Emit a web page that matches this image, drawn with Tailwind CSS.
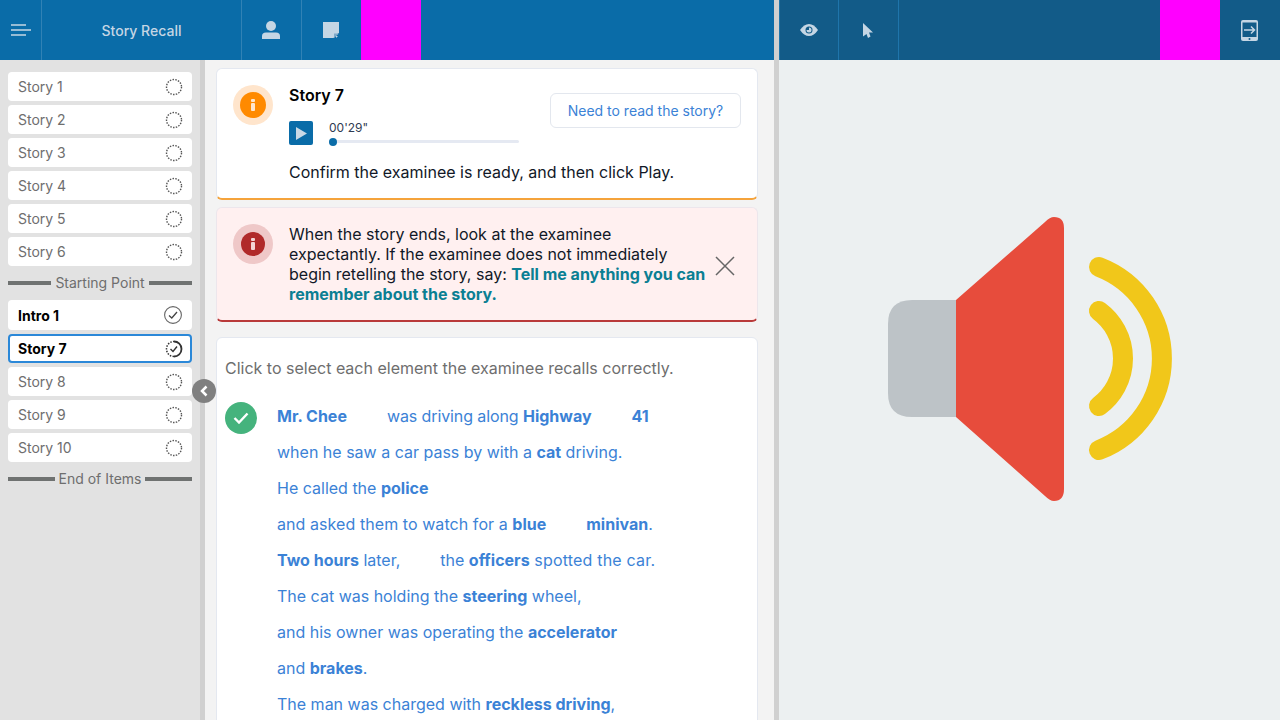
<!DOCTYPE html>
<html lang="en">
<head>
  <meta charset="UTF-8" />
  <title>Story Recall</title>
  <script src="https://cdn.jsdelivr.net/npm/@tailwindcss/browser@4"></script>
</head>
<body class="h-screen overflow-hidden font-['Inter',sans-serif] bg-[#f3f3f3]">
  <div class="flex h-[720px]">

    <!-- Left side -->
    <div class="w-[774px] flex flex-col">
      <header class="h-[60px] flex bg-[#0a6ca8] text-[#c5d6e4]">
        <div class="w-[42px] flex items-center justify-center border-r border-[#3182b5] pl-px">
          <svg width="20" height="12" viewBox="0 0 20 12" fill="none" stroke="#c5d6e4" stroke-width="1.5"><path d="M0 1H15M0 6H20M0 11H15"/></svg>
        </div>
        <div class="w-[200px] flex items-center justify-center border-r border-[#3182b5] text-sm font-medium pt-px">Story Recall</div>
        <div class="w-[60px] flex items-center justify-center border-r border-[#3182b5] pr-px">
          <svg width="18" height="18" viewBox="0 0 18 18" fill="#c5d6e4"><circle cx="9" cy="5" r="5"/><path d="M0 18V15Q0 11.500 4 11.500H14Q18 11.500 18 15V18Z"/></svg>
        </div>
        <div class="w-[59px] flex items-center justify-center pr-px">
          <svg width="16" height="16" viewBox="0 0 16 16"><path d="M0 0H16V10.500L10.500 16H0Z" fill="#c5d6e4"/><path d="M11 16V11.500H16Z" fill="#7fa9c9"/><path d="M13 16V14H15Z" fill="#c5d6e4"/></svg>
        </div>
        <div class="w-[60px] bg-[#ff00ff]"></div>
      </header>

      <div class="relative flex-1 flex min-h-0">
        <!-- Item list -->
        <aside class="w-[205px] bg-[#e2e2e2] border-r-[5px] border-[#d0d0d0] pt-3 px-2 text-sm text-[#6e6e6e]">
          <ul class="flex flex-col gap-1">
            <li class="h-[29px] flex items-center justify-between bg-white rounded pl-2.5 pr-[9px]">Story 1<svg width="18" height="18" viewBox="0 0 18 18" fill="none" stroke="#555" stroke-width="1.4" stroke-dasharray="1.500 1.300"><circle cx="9" cy="9" r="7.500"/></svg></li>
            <li class="h-[29px] flex items-center justify-between bg-white rounded pl-2.5 pr-[9px]">Story 2<svg width="18" height="18" viewBox="0 0 18 18" fill="none" stroke="#555" stroke-width="1.4" stroke-dasharray="1.500 1.300"><circle cx="9" cy="9" r="7.500"/></svg></li>
            <li class="h-[29px] flex items-center justify-between bg-white rounded pl-2.5 pr-[9px]">Story 3<svg width="18" height="18" viewBox="0 0 18 18" fill="none" stroke="#555" stroke-width="1.4" stroke-dasharray="1.500 1.300"><circle cx="9" cy="9" r="7.500"/></svg></li>
            <li class="h-[29px] flex items-center justify-between bg-white rounded pl-2.5 pr-[9px]">Story 4<svg width="18" height="18" viewBox="0 0 18 18" fill="none" stroke="#555" stroke-width="1.4" stroke-dasharray="1.500 1.300"><circle cx="9" cy="9" r="7.500"/></svg></li>
            <li class="h-[29px] flex items-center justify-between bg-white rounded pl-2.5 pr-[9px]">Story 5<svg width="18" height="18" viewBox="0 0 18 18" fill="none" stroke="#555" stroke-width="1.4" stroke-dasharray="1.500 1.300"><circle cx="9" cy="9" r="7.500"/></svg></li>
            <li class="h-[29px] flex items-center justify-between bg-white rounded pl-2.5 pr-[9px]">Story 6<svg width="18" height="18" viewBox="0 0 18 18" fill="none" stroke="#555" stroke-width="1.4" stroke-dasharray="1.500 1.300"><circle cx="9" cy="9" r="7.500"/></svg></li>
          </ul>
          <div class="h-[34px] flex items-center gap-1 pb-px">
            <span class="flex-1 h-1 bg-[#6f7271]"></span>Starting Point<span class="flex-1 h-1 bg-[#6f7271]"></span>
          </div>
          <ul class="flex flex-col gap-1">
            <li class="h-[30px] flex items-center justify-between bg-white rounded pl-2.5 pr-2.5 pt-0.5 font-bold text-black">Intro 1<svg class="-mt-0.5" width="18" height="18" viewBox="0 0 18 18" fill="none" stroke="#666" stroke-width="1.100"><circle cx="9" cy="9" r="8.400"/><path d="M5 9.500L7.800 12L13 6" stroke-width="1.300" stroke="#444"/></svg></li>
            <li class="h-[29px] flex items-center justify-between bg-white rounded border-2 border-[#2b88d8] pl-2 pr-[7px] font-bold text-black">Story 7<svg width="18" height="18" viewBox="0 0 18 18" fill="none" stroke="#333"><path d="M9 1.500A7.500 7.500 0 0 1 9 16.500" stroke-width="1.800"/><path d="M9 16.500A7.500 7.500 0 0 1 9 1.500" stroke-width="1.500" stroke-dasharray="1.500 1.300"/><path d="M5.500 9L8 11.500L12 6.500" stroke-width="1.400"/></svg></li>
            <li class="h-[29px] flex items-center justify-between bg-white rounded pl-2.5 pr-[9px]">Story 8<svg width="18" height="18" viewBox="0 0 18 18" fill="none" stroke="#555" stroke-width="1.4" stroke-dasharray="1.500 1.300"><circle cx="9" cy="9" r="7.500"/></svg></li>
            <li class="h-[29px] flex items-center justify-between bg-white rounded pl-2.5 pr-[9px]">Story 9<svg width="18" height="18" viewBox="0 0 18 18" fill="none" stroke="#555" stroke-width="1.4" stroke-dasharray="1.500 1.300"><circle cx="9" cy="9" r="7.500"/></svg></li>
            <li class="h-[29px] flex items-center justify-between bg-white rounded pl-2.5 pr-[9px]">Story 10<svg width="18" height="18" viewBox="0 0 18 18" fill="none" stroke="#555" stroke-width="1.4" stroke-dasharray="1.500 1.300"><circle cx="9" cy="9" r="7.500"/></svg></li>
          </ul>
          <div class="h-[34px] flex items-center gap-1 pb-px">
            <span class="flex-1 h-1 bg-[#6f7271]"></span>End of Items<span class="flex-1 h-1 bg-[#6f7271]"></span>
          </div>
        </aside>

        <!-- Collapse handle -->
        <div class="absolute left-[192px] top-[319px] w-6 h-6 rounded-full bg-[#808080] flex items-center justify-center">
          <svg width="10" height="12" viewBox="0 0 10 12" fill="none" stroke="white" stroke-width="2.500"><path d="M7.500 1.500L3 6L7.500 10.500"/></svg>
        </div>

        <!-- Cards -->
        <main class="w-[569px] pl-[11px] pr-4 pt-2 text-[#111827] text-base">
          <section class="h-[132px] bg-white rounded-md border border-[#e4e8f0] border-b-2 border-b-[#f5a33b] flex pl-4 pt-4 pr-4">
            <div class="w-10 h-10 rounded-full bg-[#ffe5cc] flex items-center justify-center shrink-0">
              <div class="w-[26px] h-[26px] rounded-full bg-[#ff8a00] flex items-center justify-center">
                <svg width="4" height="12" viewBox="0 0 4 12" fill="#ffe5cc"><rect width="4" height="3" y="0" rx="1"/><rect width="4" height="8" y="4" rx="1"/></svg>
              </div>
            </div>
            <div class="flex-1 ml-4">
              <div class="flex justify-between">
                <div>
                  <h2 class="text-base font-semibold text-black leading-5">Story 7</h2>
                  <div class="flex mt-4">
                    <div class="w-6 h-6 bg-[#0a6ca8] rounded-xs flex items-center justify-center">
                      <svg width="11" height="13" viewBox="0 0 11 13" fill="#c9d9e6"><path d="M0 0L11 6.500L0 13Z"/></svg>
                    </div>
                    <div class="ml-4 w-[190px]">
                      <div class="text-xs leading-none mt-px text-[#2f3b52]">00'29"</div>
                      <div class="relative h-[3px] bg-[#e5e9f2] rounded mt-[6px]">
                        <span class="absolute left-0 -top-[2.500px] w-2 h-2 rounded-full bg-[#0a6ca8]"></span>
                      </div>
                    </div>
                  </div>
                </div>
                <button class="h-[35px] w-[191px] mt-2 bg-white border border-[#e3e7ee] rounded-md text-sm text-[#3b82d6]">Need to read the story?</button>
              </div>
              <p class="mt-[17px] leading-5">Confirm the examinee is ready, and then click Play.</p>
            </div>
          </section>

          <section class="mt-[7px] h-[115px] bg-[#fff0f0] rounded-md border border-[#ece6ec] border-b-2 border-b-[#b93a3a] flex pl-4 pt-4 pr-4">
            <div class="w-10 h-10 rounded-full bg-[#efc8c8] flex items-center justify-center shrink-0">
              <div class="w-6 h-6 rounded-full bg-[#b02a2a] flex items-center justify-center">
                <svg width="4" height="12" viewBox="0 0 4 12" fill="#f3d5d5"><rect width="4" height="3" y="0" rx="1"/><rect width="4" height="8" y="4" rx="1"/></svg>
              </div>
            </div>
            <p class="w-[418px] ml-4 leading-5 whitespace-nowrap">When the story ends, look at the examinee<br />expectantly. If the examinee does not immediately<br />begin retelling the story, say: <b class="font-bold text-[#0b7f93]">Tell me anything you can<br />remember about the story.</b></p>
            <div class="ml-[8px] mt-[32px]">
              <svg width="20" height="20" viewBox="0 0 20 20" fill="none" stroke="#666" stroke-width="1.500"><path d="M1 1L19 19M19 1L1 19"/></svg>
            </div>
          </section>

          <section class="mt-[15px] h-[400px] bg-white rounded-md border border-[#e4e8f0] pl-2 pt-5">
            <p class="text-[#6e6e6e] leading-5">Click to select each element the examinee recalls correctly.</p>
            <div class="flex mt-[24px]">
              <div class="w-8 h-8 rounded-full bg-[#45b37d] flex items-center justify-center shrink-0">
                <svg width="16" height="12" viewBox="0 0 16 12" fill="none" stroke="white" stroke-width="2.400"><path d="M1.500 6L6 10.500L14.500 1.500"/></svg>
              </div>
              <div class="ml-5 text-[#3b82d6] leading-9 -mt-[4px] whitespace-nowrap">
                <p><b class="font-bold">Mr. Chee</b><span class="ml-10 tracking-[-0.1px]">was driving along </span><b class="font-bold">Highway</b><b class="font-bold ml-10">41</b></p>
                <p>when he saw a car pass by with a <b class="font-bold">cat</b> driving.</p>
                <p>He called the <b class="font-bold">police</b></p>
                <p><span class="tracking-[0.07px]">and asked them to watch for a </span><b class="font-bold">blue</b><b class="font-bold ml-10">minivan</b>.</p>
                <p><b class="font-bold">Two hours</b> later,<span class="ml-10">the </span><b class="font-bold">officers</b><span class="tracking-[0.2px]"> spotted the car.</span></p>
                <p>The cat was holding the <b class="font-bold">steering</b> wheel,</p>
                <p>and his owner was operating the <b class="font-bold">accelerator</b></p>
                <p>and <b class="font-bold">brakes</b>.</p>
                <p>The man was charged with <b class="font-bold">reckless driving</b>,</p>
              </div>
            </div>
          </section>
        </main>
      </div>
    </div>

    <!-- Divider -->
    <div class="w-[5px] bg-[#d0d0d0]"></div>

    <!-- Right side -->
    <div class="flex-1 flex flex-col bg-[#ecf0f1]">
      <header class="h-[60px] flex bg-[#125b88] text-[#c5d6e4]">
        <div class="w-[60px] flex items-center justify-center border-l border-r border-[#1f75ab]">
          <svg width="18" height="12" viewBox="0 0 18 12"><path d="M0 6Q4 0 9 0T18 6Q14 12 9 12T0 6Z" fill="#c5d6e4"/><circle cx="9" cy="6" r="3.500" fill="#125b88"/><path d="M9 3.500A2.500 2.500 0 1 1 6.500 6H9Z" fill="#c5d6e4"/></svg>
        </div>
        <div class="w-[60px] flex items-center justify-center border-r border-[#1f75ab] pr-px">
          <svg width="10" height="15" viewBox="0 0 10 15" fill="#c5d6e4"><path d="M0 0L10 9.500H6L7.500 13.500L5 15L3.500 11L0 13.500Z"/></svg>
        </div>
        <div class="flex-1"></div>
        <div class="w-[60px] bg-[#ff00ff]"></div>
        <div class="w-[60px] flex items-center justify-center pr-0.5">
          <svg width="17" height="21" viewBox="0 0 17 21" fill="none" stroke="#c5d6e4"><rect x="0" y="0" width="17" height="21" rx="2" fill="#c5d6e4" stroke="none"/><rect x="1.500" y="2.500" width="14" height="14.500" fill="#125b88" stroke="none"/><circle cx="8.500" cy="19" r="1" fill="#125b88" stroke="none"/><path d="M3 10H13M10 6.500L13.500 10L10 13.500" stroke-width="1.500"/></svg>
        </div>
      </header>
      <div class="flex-1 flex items-center justify-center pb-[63px]">
        <svg width="284" height="285" viewBox="0 0 284 285">
          <path d="M68 84H24Q0 84 0 108V177Q0 201 24 201H68Z" fill="#bdc3c7"/>
          <path d="M68 84L157 6Q162 1 166 1Q176 1 176 12V273Q176 285 166 285Q162 285 157 280L68 201Z" fill="#e74c3c"/>
          <path d="M211 51A98 98 0 0 1 211 234" fill="none" stroke="#f1c71a" stroke-width="20" stroke-linecap="round"/>
          <path d="M211 95A59 59 0 0 1 211 190" fill="none" stroke="#f1c71a" stroke-width="20" stroke-linecap="round"/>
        </svg>
      </div>
    </div>
  </div>
</body>
</html>
